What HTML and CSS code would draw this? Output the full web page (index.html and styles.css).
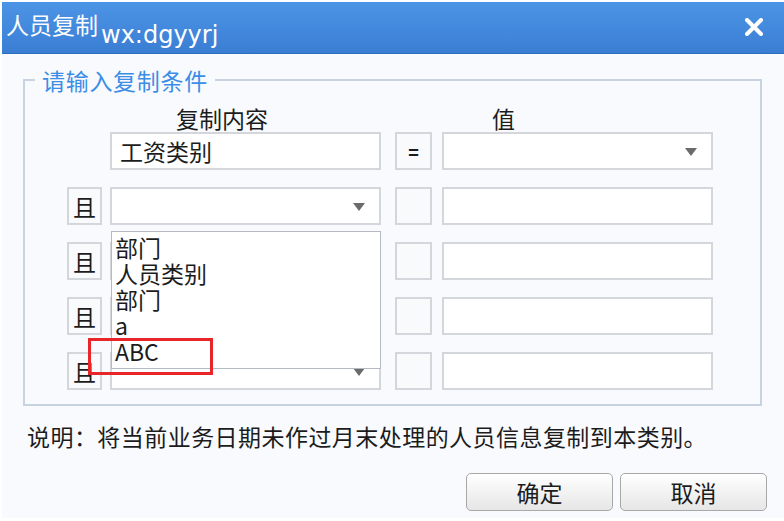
FILE: index.html
```html
<!DOCTYPE html>
<html>
	<head>
		<meta charset="UTF-8">
		<title>人员复制</title>
		<link rel="stylesheet" href="styles.css">
	</head>
	<body>
		<div class="dialog">
			<div class="titlebar">
				<span class="title">人员复制</span>
				<span class="subtitle">wx:dgyyrj</span>
				<svg class="close" width="18" height="18" viewBox="0 0 18 18">
					<path d="M2 2 L16 16 M16 2 L2 16" stroke="#fff" stroke-width="4" stroke-linecap="round"/>
				</svg>
			</div>
			<div class="content">
				<fieldset class="cond">
					<legend>请输入复制条件</legend>
					<div class="head">
						<span class="lbl-field">复制内容</span>
						<span class="lbl-value">值</span>
					</div>
					<div class="row first">
						<div class="box field">工资类别</div>
						<div class="box op">=</div>
						<div class="box value select"><i class="arrow"></i></div>
					</div>
					<div class="row">
						<div class="box and">且</div>
						<div class="box field select">
							<i class="arrow"></i>
							<!-- 下拉列表 -->
							<ul class="droplist">
								<li>部门</li>
								<li>人员类别</li>
								<li>部门</li>
								<li>a</li>
								<li>ABC</li>
							</ul>
							<div class="mark"></div>
						</div>
						<div class="box op"></div>
						<div class="box value"></div>
					</div>
					<div class="row">
						<div class="box and">且</div>
						<div class="box field select"><i class="arrow"></i></div>
						<div class="box op"></div>
						<div class="box value"></div>
					</div>
					<div class="row">
						<div class="box and">且</div>
						<div class="box field select"><i class="arrow"></i></div>
						<div class="box op"></div>
						<div class="box value"></div>
					</div>
					<div class="row">
						<div class="box and">且</div>
						<div class="box field select"><i class="arrow"></i></div>
						<div class="box op"></div>
						<div class="box value"></div>
					</div>
				</fieldset>
				<p class="note">说明：将当前业务日期未作过月末处理的人员信息复制到本类别。</p>
				<div class="buttons">
					<button type="button" class="btn">确定</button>
					<button type="button" class="btn">取消</button>
				</div>
			</div>
		</div>
	</body>
</html>
```

FILE: styles.css
```css
* {
	margin: 0;
	padding: 0;
	box-sizing: border-box;
}
body {
	background: #fff;
	font-family: "Noto Sans CJK SC", sans-serif;
	color: #1c1c1c;
}
.dialog {
	margin: 2px 0 0 2px;
	width: 782px;
	height: 516px;
	background: #f8fafd;
}
.titlebar {
	display: flex;
	align-items: flex-start;
	height: 52px;
	background: linear-gradient(#4c94e5, #3a7ed4);
	border-bottom: 1px solid #2f6dbf;
	color: #fff;
}
.title {
	font-size: 23px;
	line-height: 26px;
	margin: 9px 0 0 4px;
}
.subtitle {
	font-family: "DejaVu Sans", sans-serif;
	font-size: 24px;
	line-height: 28px;
	margin: 19px 0 0 3px;
}
.close {
	margin: 16px 21px 0 auto;
}
.content {
	padding: 0 0 0 21px;
}
.cond {
	margin-top: 12px;
	width: 739px;
	border: 2px solid #c8d3e2;
	padding: 0 0 14px 0;
}
.cond legend {
	margin-left: 10px;
	padding: 0 7px;
	font-size: 23px;
	line-height: 28px;
	letter-spacing: 0.7px;
	color: #3c8de6;
}
.head {
	display: flex;
	align-items: flex-end;
	height: 38px;
	font-size: 23px;
	line-height: 28px;
}
.lbl-field {
	margin-left: 151px;
}
.lbl-value {
	margin-left: 224px;
}
.row {
	display: flex;
	padding-left: 85px;
	margin-top: 17px;
}
.row.first {
	margin-top: 0;
}
.box {
	position: relative;
	height: 38px;
	border: 2px solid #d3d6db;
	background: #fff;
	font-size: 23px;
	line-height: 34px;
}
.and {
	width: 35px;
	margin-left: -43px;
	margin-right: 8px;
	text-align: center;
	background: #f9fafc;
}
.field {
	width: 271px;
	padding-left: 8px;
}
.op {
	width: 37px;
	margin-left: 14px;
	text-align: center;
	font-weight: bold;
	font-size: 18px;
	background: #f9fafc;
}
.value {
	width: 271px;
	margin-left: 10px;
}
.arrow {
	position: absolute;
	right: 14px;
	top: 14px;
	width: 0;
	height: 0;
	border-left: 6px solid transparent;
	border-right: 6px solid transparent;
	border-top: 8px solid #6b6b6b;
}
.droplist {
	position: absolute;
	left: -1px;
	top: 42px;
	width: 270px;
	height: 138px;
	overflow: hidden;
	list-style: none;
	background: #fff;
	border: 1px solid #b5bac2;
	padding: 2px 0 0 3px;
	z-index: 2;
}
.droplist li {
	font-size: 23px;
	line-height: 26px;
}
.mark {
	position: absolute;
	left: -24px;
	top: 149px;
	width: 125px;
	height: 37px;
	border: 3px solid #e8262a;
	z-index: 3;
}
.note {
	margin-top: 15px;
	padding-left: 4px;
	font-size: 23px;
	line-height: 30px;
	letter-spacing: 0.45px;
}
.buttons {
	display: flex;
	justify-content: flex-end;
	gap: 7px;
	margin-top: 22px;
	padding-right: 17px;
}
.btn {
	width: 147px;
	height: 38px;
	border: 1px solid #a8a8a8;
	border-radius: 5px;
	background: linear-gradient(#ffffff, #e6e6e6);
	font-family: "Noto Sans CJK SC", sans-serif;
	font-size: 23px;
	color: #1c1c1c;
}
```
